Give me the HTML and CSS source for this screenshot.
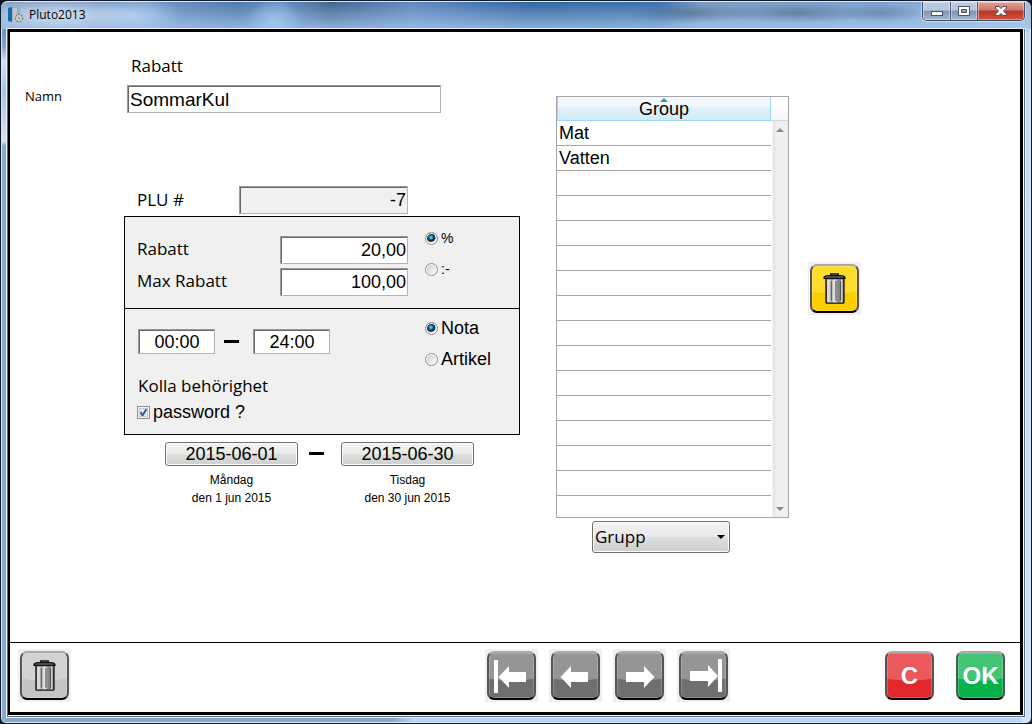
FILE: index.html
```html
<!DOCTYPE html>
<html lang="sv">
<head>
<meta charset="utf-8">
<title>Pluto2013</title>
<link rel="stylesheet" href="styles.css">
</head>
<body>
<svg class="defs" aria-hidden="true">
  <symbol id="trash" viewBox="0 0 24 34">
    <path d="M8 2.500V1h8v1.500" fill="none" stroke="#111" stroke-width="1.500"/>
    <path d="M3 6h19v25q0 1-1 1H4q-1 0-1-1z" fill="#a8a8a8" stroke="#111" stroke-width="1.500"/>
    <path d="M4 7h4v24H4z" fill="#d8d8d8"/>
    <path d="M10 7h4v24h-4zM19 7h1v24h-1z" fill="#e0e0e0"/>
    <path d="M15 7h3v24h-3z" fill="#858585"/>
    <path d="M8.500 9v20M13.500 9v20M18.500 9v20" stroke="#444" stroke-width="1" stroke-linecap="round"/>
    <path d="M1 5.500V4.500q1-1.500 4-1.500h14q3 0 4 1.500v1z" fill="#8a8a8a" stroke="#111" stroke-width="1.500"/>
  </symbol>
</svg>
<div class="window">
  <header class="titlebar">
    <svg class="app-icon" viewBox="0 0 16 16" aria-hidden="true">
      <path d="M0 1l4-1v15l-4-1z" fill="#1769ae"/>
      <path d="M4 0h7l1 2v12H4z" fill="#9facba"/>
      <path d="M5 1h4v13H5z" fill="#bfc8d1"/>
      <circle cx="11" cy="11" r="3.500" fill="#e4e4e4" stroke="#777" stroke-width="1.500" stroke-dasharray="2 1"/>
      <circle cx="11" cy="11" r="1.500" fill="#999"/>
    </svg>
    <h1 class="title">Pluto2013</h1>
    <div class="window-buttons">
      <button class="win-btn" type="button" aria-label="Minimera"><svg width="14" height="12"><rect x="1.500" y="6.500" width="11" height="4" fill="#fff" stroke="#4c5368"/></svg></button>
      <button class="win-btn win-max" type="button" aria-label="Maximera"><svg width="14" height="12"><path d="M1.500 1.500h11v9h-11zM4.500 4.500v3h5v-3z" fill="#fff" stroke="#4c5368" fill-rule="evenodd"/></svg></button>
      <button class="win-btn win-close" type="button" aria-label="Stäng"><svg width="14" height="12"><path d="M1.500 1.500h3.500l2 2 2-2h3.500v1.500l-3 3 3 3v1.500H9l-2-2-2 2H1.500V9l3-3-3-3z" fill="#fff" stroke="#5b4450"/></svg></button>
    </div>
  </header>
  <div class="bevel">
  <div class="client">
    <main class="work">
      <form class="form">
        <label class="name-label" for="name">Namn</label>
        <div class="fields">
          <h2 class="heading">Rabatt</h2>
          <input class="box name-box" id="name" type="text" value="SommarKul">
          <div class="plu">
            <label class="label" for="plu">PLU #</label>
            <input class="box num plu-box" id="plu" type="text" value="-7" readonly>
          </div>
          <div class="panel">
            <section class="discount">
              <div class="amounts">
                <label class="label" for="rabatt">Rabatt</label>
                <input class="box num" id="rabatt" type="text" value="20,00">
                <label class="label" for="max">Max Rabatt</label>
                <input class="box num" id="max" type="text" value="100,00">
              </div>
              <div class="radios small">
                <label class="choice"><input type="radio" name="kind" checked>%</label>
                <label class="choice"><input type="radio" name="kind">:-</label>
              </div>
            </section>
            <section class="rules">
              <div class="rules-main">
                <div class="times">
                  <input class="box time" type="text" value="00:00" aria-label="Från tid">
                  <span class="dash"></span>
                  <input class="box time" type="text" value="24:00" aria-label="Till tid">
                </div>
                <div class="label">Kolla behörighet</div>
                <label class="choice"><input type="checkbox" checked>password ?</label>
              </div>
              <div class="radios">
                <label class="choice"><input type="radio" name="scope" checked>Nota</label>
                <label class="choice"><input type="radio" name="scope">Artikel</label>
              </div>
            </section>
          </div>
          <div class="dates">
            <div class="date"><button class="date-btn" type="button">2015-06-01</button><p>Måndag</p><p>den 1 jun 2015</p></div>
            <span class="dash"></span>
            <div class="date"><button class="date-btn" type="button">2015-06-30</button><p>Tisdag</p><p>den 30 jun 2015</p></div>
          </div>
        </div>
      </form>
      <section class="groups">
        <div class="list">
          <table class="table">
            <thead><tr><th><svg class="sort" width="8" height="4" aria-hidden="true"><path d="M0 4l4-4 4 4z" fill="#4d8dab"/></svg>Group</th></tr></thead>
            <tbody>
              <tr><td>Mat</td></tr><tr><td>Vatten</td></tr><tr><td></td></tr><tr><td></td></tr>
              <tr><td></td></tr><tr><td></td></tr><tr><td></td></tr><tr><td></td></tr>
              <tr><td></td></tr><tr><td></td></tr><tr><td></td></tr><tr><td></td></tr>
              <tr><td></td></tr><tr><td></td></tr><tr><td></td></tr><tr><td></td></tr>
            </tbody>
          </table>
          <div class="scroll">
            <div class="scroll-head"></div>
            <div class="scroll-track">
              <svg width="8" height="4"><path d="M0 4l4-4 4 4z" fill="#888"/></svg>
              <svg width="8" height="4"><path d="M0 0l4 4 4-4z" fill="#888"/></svg>
            </div>
          </div>
        </div>
        <div class="select-wrap">
          <select class="select" aria-label="Grupp"><option>Grupp</option></select>
          <svg class="arrow" width="8" height="4" aria-hidden="true"><path d="M0 0h8L4 4z"/></svg>
        </div>
      </section>
      <button class="key yellow" type="button" aria-label="Ta bort grupp"><span class="face"><svg class="bin" width="23" height="32"><use href="#trash"/></svg></span></button>
    </main>
    <footer class="toolbar">
      <button class="key silver" type="button" aria-label="Ta bort"><span class="face"><svg class="bin" width="23" height="32"><use href="#trash"/></svg></span></button>
      <nav class="nav">
        <button class="key gray" type="button" aria-label="Första"><span class="face"><svg width="45" height="45"><path d="M5 7h4v33H5zM9.500 24L20 13v6h17v10H20v6z" fill="#fff"/></svg></span></button>
        <button class="key gray" type="button" aria-label="Föregående"><span class="face"><svg width="45" height="45"><path d="M7.500 24L18 13v6h17v10H18v6z" fill="#fff"/></svg></span></button>
        <button class="key gray" type="button" aria-label="Nästa"><span class="face"><svg width="45" height="45"><path d="M37.500 24L27 13v6H9v10h18v6z" fill="#fff"/></svg></span></button>
        <button class="key gray" type="button" aria-label="Sista"><span class="face"><svg width="45" height="45"><path d="M37 6h4v33h-4zM37 23L27 12v6H9v10h18v6z" fill="#fff"/></svg></span></button>
      </nav>
      <div class="actions">
        <button class="key red" type="button"><span class="face">C</span></button>
        <button class="key green" type="button"><span class="face">OK</span></button>
      </div>
    </footer>
  </div>
  </div>
</div>
</body>
</html>
```
FILE: styles.css
```css
* { box-sizing: border-box; }
body { margin: 0; background: #0c1424; font-family: "Liberation Sans", Arial, sans-serif; font-size: 18px; color: #000; }
button, input, select { font: inherit; color: inherit; margin: 0; }
h1, h2, p { margin: 0; font-weight: normal; }
svg { display: block; }
.defs { position: absolute; width: 0; height: 0; }

.window {
  min-height: 100vh;
  display: flex;
  flex-direction: column;
  padding: 0 6px 6px;
  border: 1px solid #111a2b;
  border-radius: 8px 8px 6px 6px;
  box-shadow: inset 0 0 0 1px #dbe8f6;
  background:
    linear-gradient(#46688f 0, #7d9ac4 34px, #86a0c8 45px, #cfe1f7 60px, #a9c4e4 90px, #dce5ef 140px, #8ba8cb 145px, #8ba8cb 100%) left / 8px 100% no-repeat,
    linear-gradient(#7f9fc4 0, #c5dcf5 34px, #cfe4fb 100%) right / 10px 100% no-repeat,
    linear-gradient(90deg, #8ba8cb 0 38%, #b4d6f7 40% 100%);
}
.titlebar {
  display: flex;
  align-items: flex-start;
  height: 28px;
  margin: 0 -6px;
  padding: 0 6px;
  border-top: 1px solid #dbe8f6;
  border-radius: 7px 7px 0 0;
  background:
    radial-gradient(ellipse 70px 10px at 690px 11px, #4a647f99, #4a647f00),
    radial-gradient(ellipse 80px 10px at 795px 11px, #4a647f99, #4a647f00),
    radial-gradient(ellipse 45px 9px at 880px 11px, #4a647f77, #4a647f00),
    radial-gradient(ellipse 80px 16px at 60px 13px, #dfeaf8cc, #dfeaf800),
    radial-gradient(ellipse 45px 20px at 135px 14px, #b8d4f3cc, #b8d4f300),
    radial-gradient(ellipse 28px 22px at 273px 20px, #a5cbf0cc, #a5cbf000),
    linear-gradient(#ffffff00, #a9cbf0bb),
    linear-gradient(90deg, #8ba4c4 0, #7395c4 14%, #4c77ab 23%, #6590c4 27%, #41658f 32%, #6088c0 40%, #34659f 51%, #3c70ad 64%, #7b9bc5 68%, #7da3cf 85%, #a3bbd6 100%);
}
.app-icon { width: 16px; height: 16px; margin: 5px 5px 0 1px; }
.title { font: 12px/26px "Open Sans", Tahoma, sans-serif; }
.window-buttons {
  display: flex;
  margin-left: auto;
  border: 1px solid #3b4b63;
  border-top: 0;
  border-radius: 0 0 5px 5px;
  box-shadow: 0 0 0 1px #dfe9f5bb;
  overflow: hidden;
}
.win-btn {
  display: grid;
  place-items: center;
  width: 28px;
  height: 18px;
  padding: 0;
  border: 0;
  border-right: 1px solid #4b5b74;
  box-shadow: inset 0 0 0 1px #ffffff66;
  background: linear-gradient(#b9c8dc 0 45%, #8094b0 50%, #a7b9d1);
}
.win-max { width: 27px; }
.win-close { width: 46px; border-right: 0; background: linear-gradient(#e1a097 0, #d0776a 45%, #b93522 50%, #d2543f); }

.bevel { flex: 1; display: flex; border: 1px solid #5a6b7f; box-shadow: 0 0 0 1px #e2eefb; border-top-width: 0; padding-right: 1px; padding-bottom: 1px; background: #fff; }
.client { flex: 1; display: flex; flex-direction: column; background: #fff; border: solid #000; border-width: 3px 3px 3px 2px; }
.work { flex: 1; display: flex; align-items: flex-start; }

.form { display: flex; padding-left: 15px; }
.name-label { width: 99px; padding: 54px 0 10px; font: 13px/20px "Open Sans", Tahoma, sans-serif; }
.fields { width: 396px; }
.heading, .label { font-family: "Open Sans", Tahoma, sans-serif; font-size: 17px; line-height: 24px; }
.heading { padding: 22px 0 7px 7px; }
.box {
  display: block;
  width: 128px;
  height: 28px;
  padding: 1px 1px 0 2px;
  border: 1px solid #b4b4b4;
  border-top-color: #999;
  border-left-color: #999;
  border-radius: 0;
  box-shadow: inset 1px 1px 0 #696969;
  background: #fff;
}
.name-box { width: 314px; margin-left: 3px; font-size: 19px; }
.num { text-align: right; }
.plu { display: flex; justify-content: space-between; align-items: center; width: 284px; margin-top: 73px; padding-left: 13px; }
.plu-box { width: 169px; background: #f0f0f0; }
.panel { margin-top: 2px; border: 1px solid #000; background: #f0f0f0; }
.discount { display: flex; padding: 19px 12px 12px; }
.amounts { display: grid; grid-template-columns: 143px 128px; row-gap: 4px; align-items: center; }
.amounts .label { padding-bottom: 2px; }
.choice { display: flex; align-items: center; gap: 3px; }
.radios { display: grid; gap: 7px; margin-left: 17px; line-height: 24px; }
.small { font-size: 14px; margin-top: -10px; align-content: start; }
.choice input { appearance: none; width: 13px; height: 13px; border: 1px solid #8e8f8f; background: #f4f4f4; flex: none; }
.choice input[type="radio"] { border-radius: 50%; box-shadow: inset 0 0 0 1px #fff; background: radial-gradient(circle at 70% 70%, #f4f4f4, #c4c8cb); }
.choice input[type="radio"]:checked { background: radial-gradient(circle at 45% 40%, #8fdcf5 0, #1d7aab 2px, #10304e 3px, #10304e 4px, #e4e8ea 5px); }
.choice input[type="checkbox"] {
  box-shadow: inset 0 0 0 1px #f4f4f4, inset 0 0 0 2px #c0c8d0;
  background: url("data:image/svg+xml,%3Csvg xmlns='http://www.w3.org/2000/svg' viewBox='0 0 11 11'%3E%3Cpath d='M2.500 5L4.500 8.500L8.500 2' fill='none' stroke='%23415a9e' stroke-width='2'/%3E%3C/svg%3E") #e8ecf2;
}
.rules { display: flex; align-items: flex-start; padding: 7px 12px 10px; border-top: 1px solid #000; }
.rules-main { width: 271px; padding-top: 13px; line-height: 24px; }
.rules-main .label { margin: 20px 0 2px; padding-left: 1px; }
.times { display: flex; align-items: center; gap: 9px; padding-left: 1px; }
.time { width: 77px; height: 25px; text-align: center; }
.dash { width: 15px; height: 3px; background: #000; }
.times .dash { margin-right: 5px; }
.dates { display: flex; justify-content: center; gap: 11px; padding: 7px 5px 0 0; }
.dates .dash { margin: 10px 6px 0 0; }
.date { width: 133px; text-align: center; font-size: 12px; line-height: 18px; }
.date-btn {
  display: block;
  width: 100%;
  height: 24px;
  margin-bottom: 5px;
  padding: 0;
  border: 1px solid #707070;
  border-radius: 3px;
  box-shadow: inset 0 0 0 1px #fcfcfc;
  background: linear-gradient(#f2f2f2, #ebebeb 48%, #dddddd 52%, #cfcfcf);
  font-size: 18px;
  line-height: 22px;
}

.groups { width: 233px; margin: 64px 19px 0 36px; }
.list { display: flex; border: 1px solid #a5a5ab; }
.table { width: 214px; border-collapse: separate; border-spacing: 0; line-height: 24px; }
.table th { height: 24px; padding: 1px 0 0; border: 1px solid #96d9f9; border-top: 0; line-height: 22px; font-weight: normal; background: linear-gradient(#f2f9fc 0 40%, #e1f1f9 45%, #d5eaf3); position: relative; }
.sort { position: absolute; left: 50%; top: 1px; margin-left: -4px; }
.table td { height: 25px; padding: 0 2px; border-bottom: 1px solid #a5a5ab; }
.table tr:last-child td { height: 21px; border: 0; }
.scroll { flex: 1; display: flex; flex-direction: column; }
.scroll-head { height: 24px; border-bottom: 1px solid #d5d5d5; background: linear-gradient(#fff 40%, #f5f6f7); }
.scroll-track { flex: 1; display: flex; flex-direction: column; justify-content: space-between; align-items: center; padding: 7px 0 6px; background: linear-gradient(90deg, #fff 0 1px, #e6e6e6 2px, #f0f0f0 7px); }
.select-wrap { position: relative; width: 138px; margin: 3px auto 0 36px; }
.select { display: block; appearance: none; width: 100%; height: 32px; padding: 0 2px 2px; border: 1px solid #707070; border-radius: 3px; box-shadow: inset 0 0 0 1px #fcfcfc; background: linear-gradient(#f2f2f2, #ebebeb 48%, #dddddd 52%, #cfcfcf); font-family: "Open Sans", Tahoma, sans-serif; font-size: 17px; }
.arrow { position: absolute; right: 5px; top: 14px; pointer-events: none; }

.key { width: 53px; height: 53px; padding: 2px; border: 0; background: #f0f0f0; flex: none; }
.face {
  display: grid;
  place-items: center;
  width: 49px;
  height: 49px;
  border: 2px solid;
  border-color: #aaa #555 #000;
  border-radius: 7px;
  box-shadow: inset 0 0 0 1px #ffffff33;
  color: #fff;
  font-size: 24px;
  font-weight: bold;
  background: radial-gradient(ellipse 60px 28px at 50% 0, var(--top) 0 97%, var(--low) 100%);
}
.yellow { --top: #ffdc2c; --low: #fdcf00; margin-top: 230px; }
.silver { --top: #d2d2d2; --low: #c3c3c3; }
.gray { --top: #959595; --low: #6f6f6f; }
.red { --top: #ea5a5c; --low: #e2282c; background: #fcfcfc; }
.green { --top: #42c676; --low: #06b34a; background: #fcfcfc; }
.toolbar { display: flex; padding: 6px 13px 10px 8px; border-top: 1px solid #000; }
.nav { display: flex; gap: 11px; margin-left: auto; }
.actions { display: flex; gap: 18px; margin-left: 153px; }
```
